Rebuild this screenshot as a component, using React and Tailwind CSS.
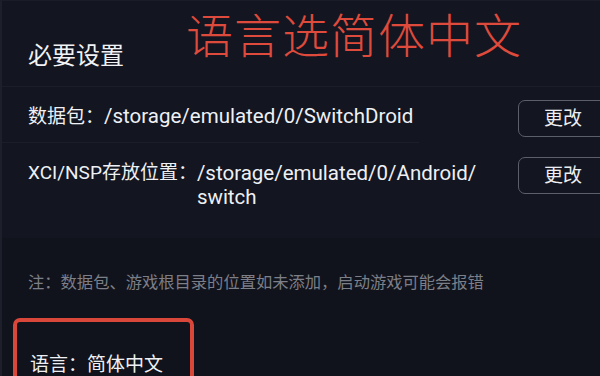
import React from 'react';

const font = { fontFamily: 'Roboto, "Noto Sans CJK SC", sans-serif' };

const ChangeButton = () => (
    <button className="w-[90px] h-[37px] shrink-0 rounded-[7px] border-[1.5px] border-[#5b5f69] text-[19px] leading-none text-[#eceef2]">
        更改
    </button>
);

const App = () => {
    return (
        <div className="w-[600px] h-[376px] overflow-hidden bg-[#131520] border-l-2 border-l-[#1d202b] border-t border-t-[#1a1d28] text-[#eef0f4]" style={font}>
            {/* header */}
            <div className="relative h-[86px] border-b border-[#1b1e29] pl-[26px] pt-[43px]">
                <h1 className="text-[24px] leading-[24px] text-[#f1f2f5]">必要设置</h1>
                <div className="absolute left-[184px] top-[12px] text-[47px] font-light leading-none tracking-[1px] text-[#de4a3b]">
                    语言选简体中文
                </div>
            </div>

            {/* data package */}
            <div className="flex items-start justify-between pl-[26px] pt-[13px] h-[55px]">
                <div className="mt-[4px] text-[19px] leading-[24px]">
                    数据包：<span className="text-[20.5px]">/storage/emulated/0/SwitchDroid</span>
                </div>
                <div className="-mr-[8px]"><ChangeButton /></div>
            </div>
            <div className="w-[417px] h-px bg-[#1b1e29]" />

            {/* xci / nsp */}
            <div className="flex items-start justify-between pl-[26px] pt-[14px] h-[95px]">
                <div className="flex mt-[4px] text-[19px] leading-[24px]">
                    <span>XCI/NSP存放位置：</span>
                    <span className="text-[20.5px]">/storage/emulated/0/Android/<br />switch</span>
                </div>
                <div className="-mr-[8px]"><ChangeButton /></div>
            </div>

            {/* note */}
            <div className="bg-[#11131c] h-[80px] pl-[26px] pt-[33px]">
                <p className="text-[16.3px] leading-[24px] text-[#7c7f88]">注：数据包、游戏根目录的位置如未添加，启动游戏可能会报错</p>
            </div>

            {/* language */}
            <div className="bg-[#11131c] h-[100px] pl-[11px]">
                <div className="w-[181px] h-[90px] rounded-[7px] border-4 border-[#d8473a] pl-[13px] pt-[31px]">
                    <span className="text-[19px] leading-[24px] whitespace-nowrap">语言：简体中文</span>
                </div>
            </div>
        </div>
    );
};

export default App;
